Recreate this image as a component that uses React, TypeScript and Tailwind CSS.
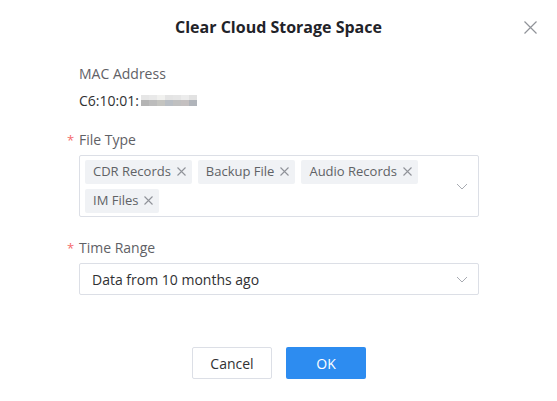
import React from 'react';

const FONT = { fontFamily: '"Open Sans", "Noto Sans", sans-serif' };

const fileTypes = ['CDR Records', 'Backup File', 'Audio Records', 'IM Files'];

// masked tail of the MAC address, two rows of grey blocks
const maskTop = ['#e6e6e6', '#e9e9e9', '#f1f1ef', '#e4e4e4', '#e6e6e6', '#ececec', '#e2e2e2'];
const maskBottom = ['#b4b4b4', '#bcbcbc', '#c4c4c0', '#b9bec4', '#c0c0c0', '#c4c0c0', '#b0b4ba'];

const Chevron: React.FC = () => (
  <svg width="12" height="7" viewBox="0 0 12 7" fill="none">
    <path d="M1 1 L6 6 L11 1" stroke="#a8abb2" strokeWidth="1" />
  </svg>
);

const TagClose: React.FC = () => (
  <svg width="9" height="9" viewBox="0 0 9 9" fill="none">
    <path d="M0.5 0.5 L8.5 8.5 M8.5 0.5 L0.5 8.5" stroke="#909399" strokeWidth="1.1" />
  </svg>
);

const RequiredLabel: React.FC<{ text: string }> = ({ text }) => (
  <div className="flex items-center -ml-[12px] h-[20px] text-[14px] font-medium text-[#5f6166]">
    <span className="w-[12px] text-[#f56c6c] text-[13px] leading-none pt-[3px]">*</span>
    <span>{text}</span>
  </div>
);

export default function App() {
  return (
    <div className="w-[557px] h-[401px] bg-white flex flex-col" style={FONT}>
      {/* header */}
      <div className="relative h-[54px] flex items-center justify-center">
        <span className="text-[16px] font-bold text-[#1f2329]">Clear Cloud Storage Space</span>
        <button className="absolute right-[20px] top-[20px] w-[14px] h-[14px] flex items-center justify-center">
          <svg width="13" height="13" viewBox="0 0 13 13" fill="none">
            <path d="M0.5 0.5 L12.5 12.5 M12.5 0.5 L0.5 12.5" stroke="#909399" strokeWidth="1.2" />
          </svg>
        </button>
      </div>

      <div className="flex flex-col pl-[79px] pr-[78px] pt-[9px]">
        {/* MAC */}
        <div className="h-[20px] flex items-center text-[14px] font-medium text-[#5f6166]">MAC Address</div>
        <div className="mt-[7px] h-[20px] flex items-center text-[14px] text-[#303133]">
          <span>C6:10:01:</span>
          <div className="flex flex-col ml-[2px]">
            <div className="flex">
              {maskTop.map((c, i) => (
                <div key={i} className="w-[8px] h-[5px]" style={{ backgroundColor: c }} />
              ))}
            </div>
            <div className="flex">
              {maskBottom.map((c, i) => (
                <div key={i} className="w-[8px] h-[6px]" style={{ backgroundColor: c }} />
              ))}
            </div>
          </div>
        </div>

        {/* file type */}
        <div className="mt-[19px]">
          <RequiredLabel text="File Type" />
        </div>
        <div className="mt-[6px] h-[62px] border border-[#dcdfe6] rounded-[2px] flex items-center pl-[5px] pr-[10px]">
          <div className="flex-1 flex flex-wrap gap-x-[6px] gap-y-[5px] pr-[10px]">
            {fileTypes.map((t) => (
              <div key={t} className="h-[24px] flex items-center bg-[#f0f2f5] pl-[8px] pr-[4px] rounded-[2px] text-[13px] text-[#606266]">
                <span>{t}</span>
                <span className="ml-[4px] w-[13px] flex items-center justify-center">
                  <TagClose />
                </span>
              </div>
            ))}
          </div>
          <Chevron />
        </div>

        {/* time range */}
        <div className="mt-[20px]">
          <RequiredLabel text="Time Range" />
        </div>
        <div className="mt-[6px] h-[32px] border border-[#dcdfe6] rounded-[2px] flex items-center pl-[12px] pr-[10px]">
          <span className="flex-1 text-[14px] text-[#303133]">Data from 10 months ago</span>
          <Chevron />
        </div>
      </div>

      {/* footer */}
      <div className="mt-[52px] flex justify-center gap-[14px] pl-[1px]">
        <button className="w-[80px] h-[32px] border border-[#dcdfe6] rounded-[2px] bg-white text-[14px] text-[#303133]">Cancel</button>
        <button className="w-[80px] h-[32px] rounded-[2px] bg-[#2d8cf0] text-[14px] text-white">OK</button>
      </div>
    </div>
  );
}
